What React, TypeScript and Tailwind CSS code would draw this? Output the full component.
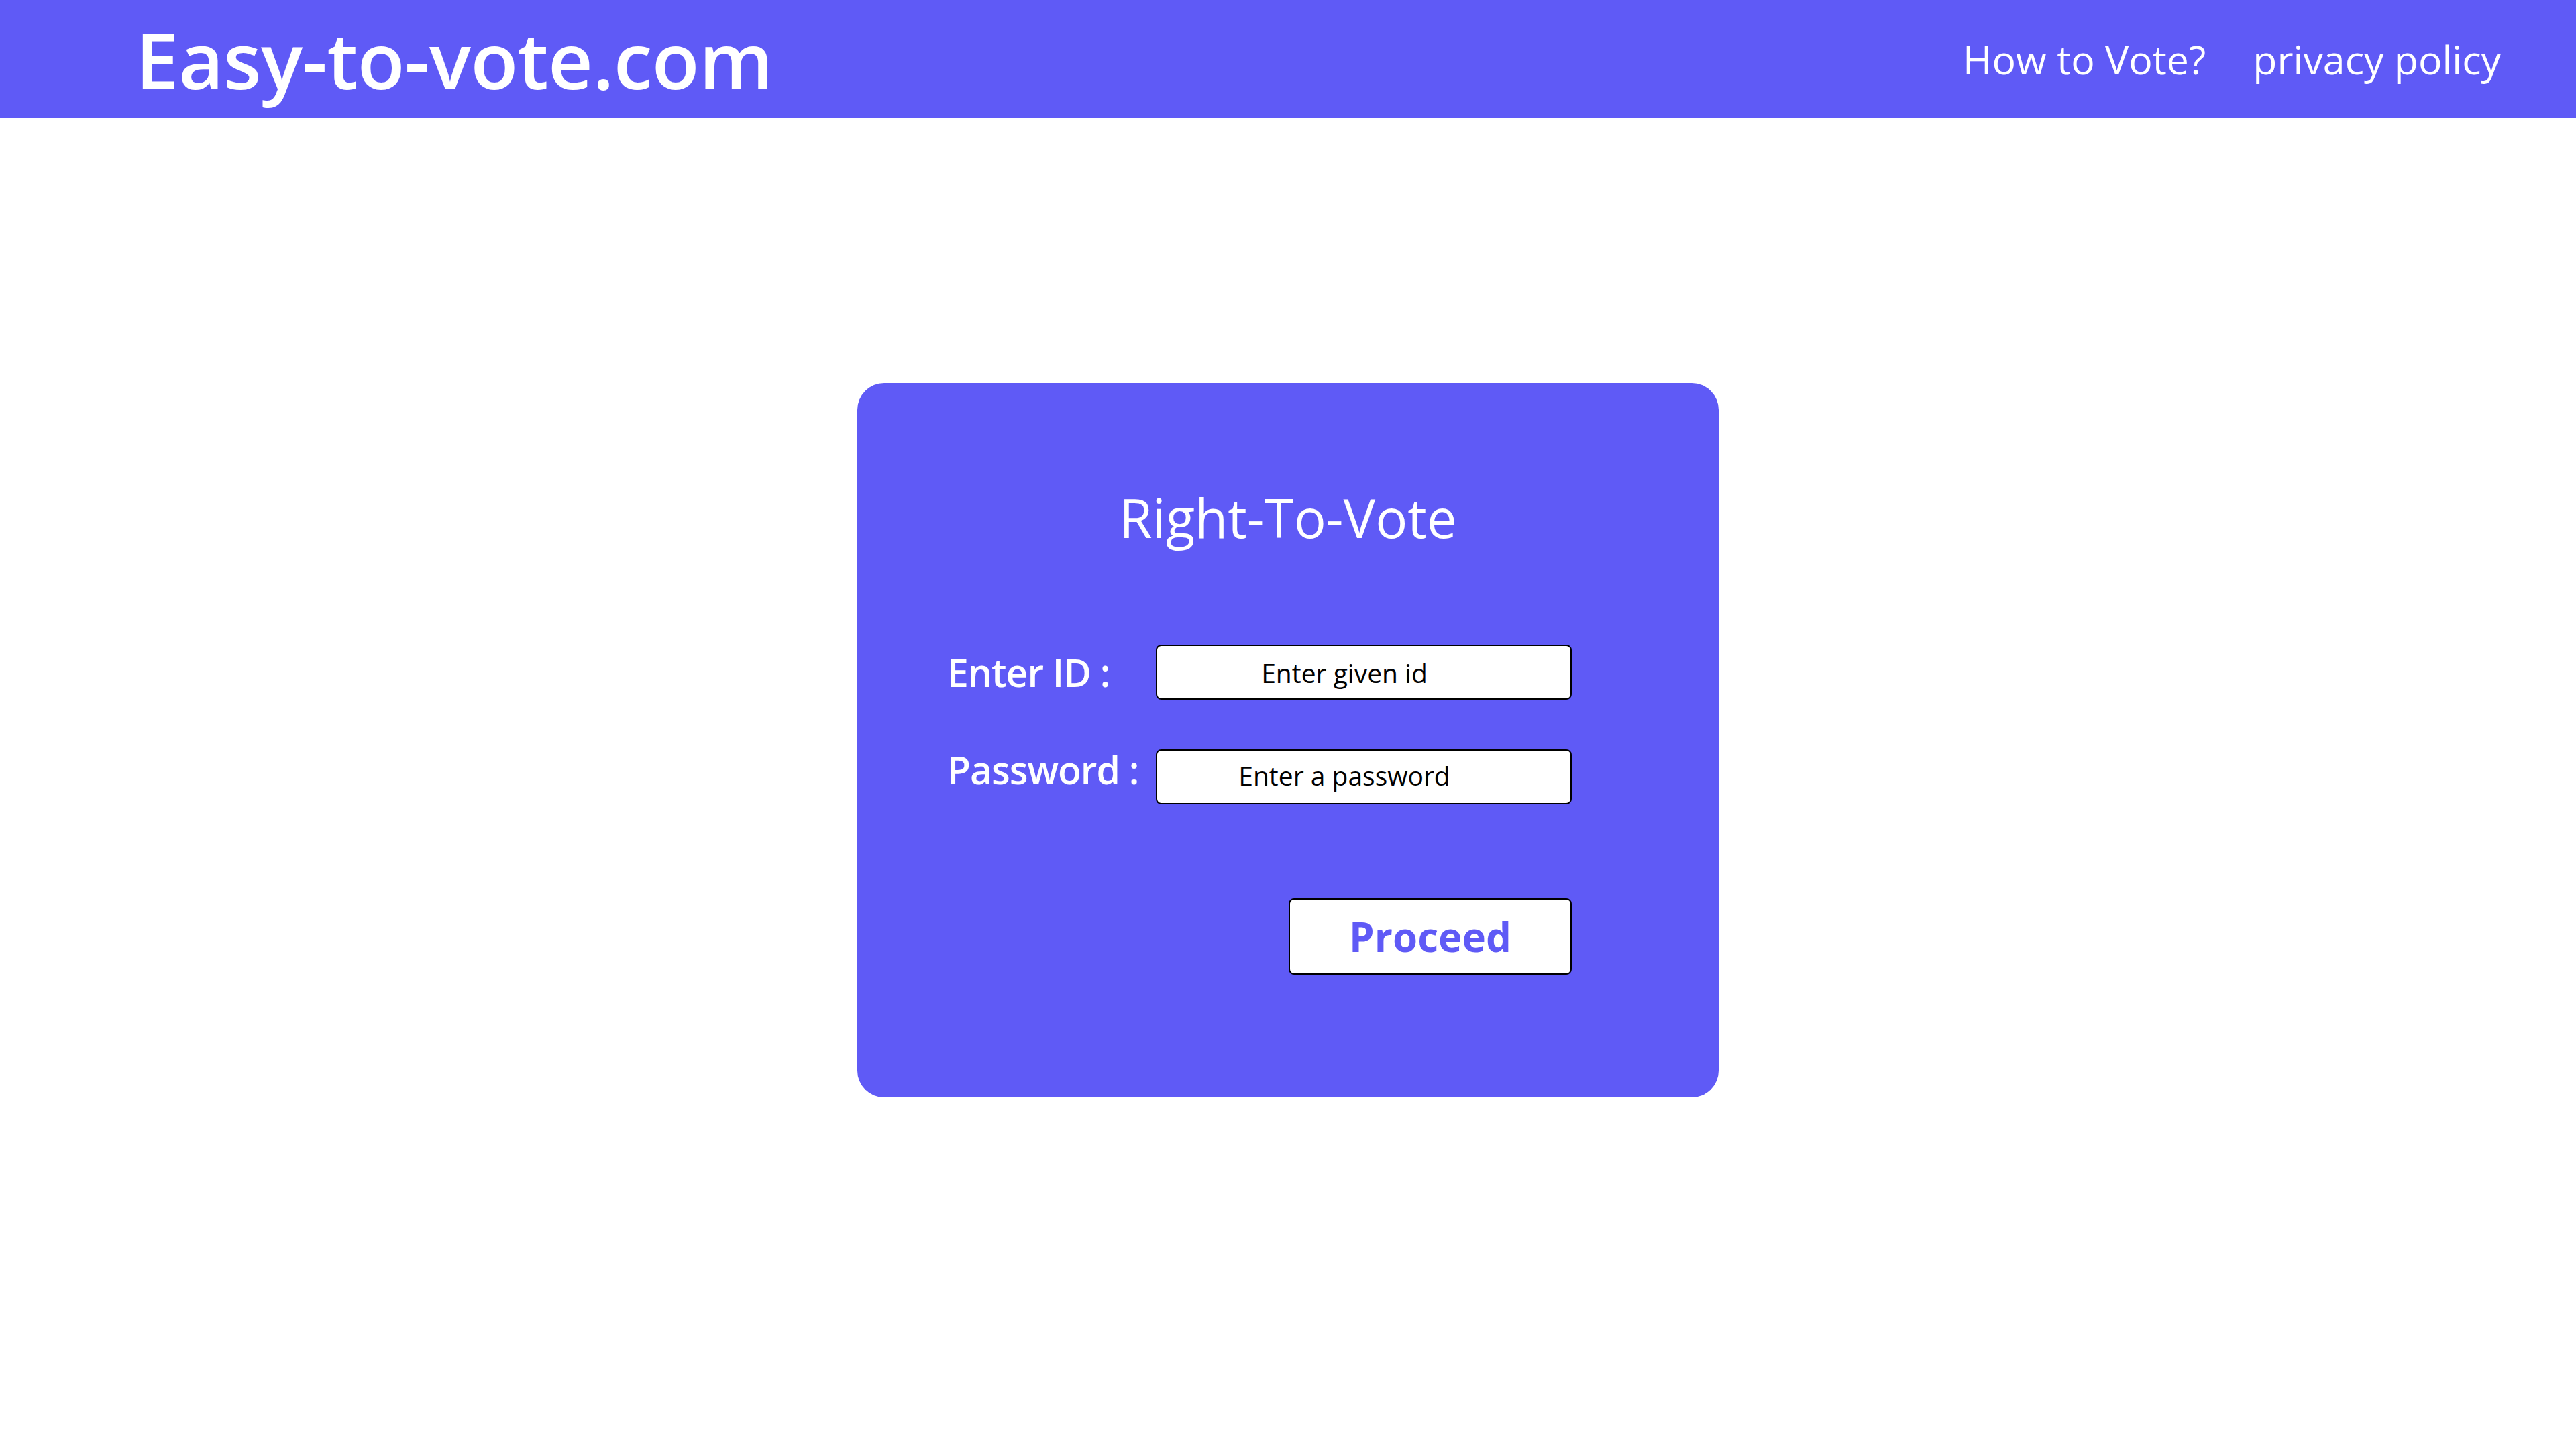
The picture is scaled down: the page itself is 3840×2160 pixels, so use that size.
import React from "react";

const font = { fontFamily: '"Open Sans", "Noto Sans", sans-serif' };

export default function App() {
  return (
    <div className="min-h-[2160px] w-full bg-white" style={font}>
      <header className="flex h-[176px] items-center justify-between bg-[#5f5af6] pl-[202px] pr-[112px] text-white">
        <div className="text-[116px] leading-none font-semibold tracking-[-0.5px]">Easy-to-vote.com</div>
        <nav className="flex items-center gap-[70px] text-[59px] leading-none font-normal">
          <a className="cursor-pointer">How to Vote?</a>
          <a className="cursor-pointer">privacy policy</a>
        </nav>
      </header>
      <main className="flex justify-center pt-[395px]">
        <div className="flex h-[1065px] w-[1284px] flex-col rounded-[40px] bg-[#5f5af6] pl-[134px] pr-[219px] pt-[160px] text-white">
          <h1 className="pl-[85px] text-center text-[80px] leading-none font-normal">Right-To-Vote</h1>
          <div className="mt-[150px] flex items-center">
            <label className="w-[311px] text-[57px] leading-none font-semibold tracking-[-1px]">Enter ID :</label>
            <input
              className="h-[82px] w-[620px] rounded-[8px] border-2 border-black bg-white pr-[58px] text-center text-[39px] text-black placeholder:text-black outline-none"
              placeholder="Enter given id"
            />
          </div>
          <div className="mt-[74px] flex items-center">
            <label className="mb-[22px] w-[311px] text-[57px] leading-none font-semibold tracking-[-1px]">Password :</label>
            <input
              type="password"
              className="h-[82px] w-[620px] rounded-[8px] border-2 border-black bg-white pr-[58px] pb-[6px] text-center text-[39px] text-black placeholder:text-black outline-none"
              placeholder="Enter a password"
            />
          </div>
          <div className="mt-[140px] flex justify-end">
            <button className="h-[114px] w-[422px] rounded-[8px] border-2 border-black bg-white text-[60px] leading-none font-bold text-[#5f5af6]">
              Proceed
            </button>
          </div>
        </div>
      </main>
    </div>
  );
}
